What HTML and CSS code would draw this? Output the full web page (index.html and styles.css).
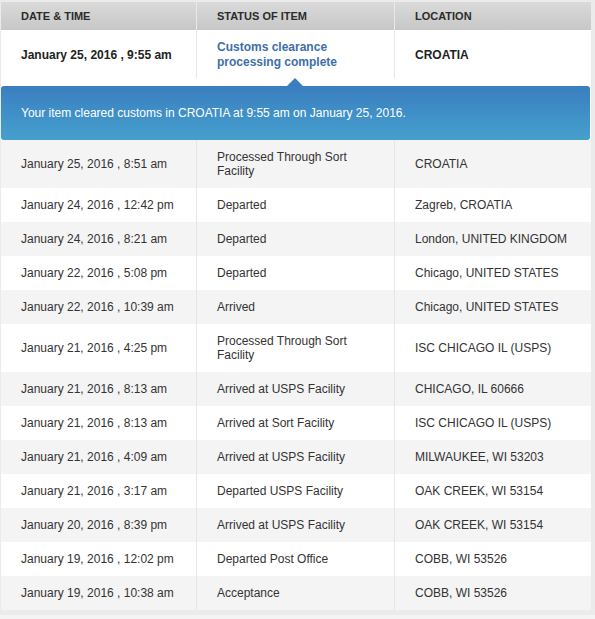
FILE: index.html
```html
<!DOCTYPE html>
<html>
<head>
<meta charset="utf-8">
<link rel="stylesheet" href="styles.css">
</head>
<body>
<div class="track">
  <div class="row head">
    <div class="cell">DATE &amp; TIME</div>
    <div class="cell">STATUS OF ITEM</div>
    <div class="cell">LOCATION</div>
  </div>
  <div class="row latest">
    <div class="cell">January 25, 2016 , 9:55 am</div>
    <div class="cell status">Customs clearance processing complete</div>
    <div class="cell">CROATIA</div>
  </div>
  <div class="tip-wrap">
    <div class="tip">Your item cleared customs in CROATIA at 9:55 am on January 25, 2016.</div>
  </div>
  <div class="row odd"><div class="cell">January 25, 2016 , 8:51 am</div><div class="cell">Processed Through Sort Facility</div><div class="cell">CROATIA</div></div>
  <div class="row"><div class="cell">January 24, 2016 , 12:42 pm</div><div class="cell">Departed</div><div class="cell">Zagreb, CROATIA</div></div>
  <div class="row odd"><div class="cell">January 24, 2016 , 8:21 am</div><div class="cell">Departed</div><div class="cell">London, UNITED KINGDOM</div></div>
  <div class="row"><div class="cell">January 22, 2016 , 5:08 pm</div><div class="cell">Departed</div><div class="cell">Chicago, UNITED STATES</div></div>
  <div class="row odd"><div class="cell">January 22, 2016 , 10:39 am</div><div class="cell">Arrived</div><div class="cell">Chicago, UNITED STATES</div></div>
  <div class="row"><div class="cell">January 21, 2016 , 4:25 pm</div><div class="cell">Processed Through Sort Facility</div><div class="cell">ISC CHICAGO IL (USPS)</div></div>
  <div class="row odd"><div class="cell">January 21, 2016 , 8:13 am</div><div class="cell">Arrived at USPS Facility</div><div class="cell">CHICAGO, IL 60666</div></div>
  <div class="row"><div class="cell">January 21, 2016 , 8:13 am</div><div class="cell">Arrived at Sort Facility</div><div class="cell">ISC CHICAGO IL (USPS)</div></div>
  <div class="row odd"><div class="cell">January 21, 2016 , 4:09 am</div><div class="cell">Arrived at USPS Facility</div><div class="cell">MILWAUKEE, WI 53203</div></div>
  <div class="row"><div class="cell">January 21, 2016 , 3:17 am</div><div class="cell">Departed USPS Facility</div><div class="cell">OAK CREEK, WI 53154</div></div>
  <div class="row odd"><div class="cell">January 20, 2016 , 8:39 pm</div><div class="cell">Arrived at USPS Facility</div><div class="cell">OAK CREEK, WI 53154</div></div>
  <div class="row"><div class="cell">January 19, 2016 , 12:02 pm</div><div class="cell">Departed Post Office</div><div class="cell">COBB, WI 53526</div></div>
  <div class="row odd"><div class="cell">January 19, 2016 , 10:38 am</div><div class="cell">Acceptance</div><div class="cell">COBB, WI 53526</div></div>
</div>
<div class="below"></div>
</body>
</html>
```

FILE: styles.css
```css
html, body {
  margin: 0;
  padding: 0;
}
body {
  background: #ebebeb;
  font-family: "Liberation Sans", Arial, sans-serif;
  font-size: 12px;
  color: #333;
  width: 595px;
  height: 619px;
  overflow: hidden;
}
.track {
  margin: 2px 0 0 1px;
  width: 590px;
  background: #fff;
}
.row {
  display: grid;
  grid-template-columns: 195px 198px 197px;
  background: #fff;
}
.row.odd {
  background: #f4f4f4;
}
.cell {
  display: flex;
  align-items: center;
  padding: 10px 8px 10px 20px;
  line-height: 14px;
  min-height: 14px;
}
.cell + .cell {
  border-left: 1px solid #e6e6e6;
}
.head {
  background: linear-gradient(#dadada, #c7c7c7);
}
.head .cell {
  height: 28px;
  padding-top: 0;
  padding-bottom: 0;
  font-size: 11px;
  font-weight: bold;
  color: #2b2b2b;
}
.head .cell + .cell {
  border-left: 1px solid #e9e9e9;
}
.latest .cell {
  padding-top: 10px;
  padding-bottom: 8px;
  line-height: 15px;
  font-weight: bold;
  color: #222;
}
.latest .cell.status {
  color: #3e6fa9;
}
.tip-wrap {
  position: relative;
  background: #fff;
  padding-top: 8px;
}
.tip-wrap::before {
  content: "";
  position: absolute;
  left: 286px;
  top: 0;
  border-left: 8px solid transparent;
  border-right: 8px solid transparent;
  border-bottom: 8px solid #3a7ec0;
}
.tip {
  width: 569px;
  height: 54px;
  padding-left: 20px;
  display: flex;
  align-items: center;
  border-radius: 3px;
  background: linear-gradient(#3a7ec0, #45a0cd);
  color: #fff;
  font-size: 12px;
}
.below {
  margin-top: 5px;
  height: 10px;
  background: #f4f4f4;
}
```
